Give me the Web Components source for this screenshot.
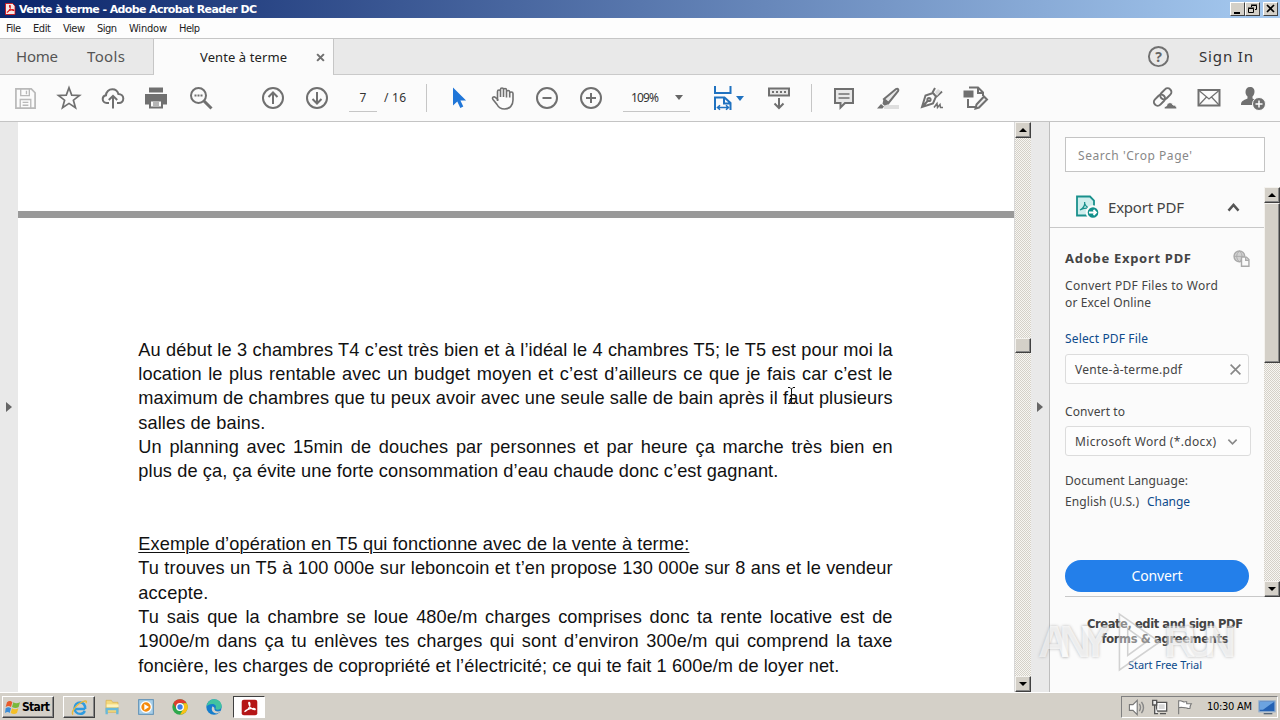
<!DOCTYPE html>
<html lang="en"><head><meta charset="utf-8"><title>Vente à terme - Adobe Acrobat Reader DC</title>
<style>html,body{margin:0;width:1280px;height:720px;overflow:hidden;background:#fff}</style></head><body>
<reader-app></reader-app>
<script>
const define=(name,html,setup)=>{
  customElements.define(name,class extends HTMLElement{
    constructor(){super();this.attachShadow({mode:'open'}).innerHTML=html;}
    connectedCallback(){setup&&setup.call(this,this.shadowRoot);}
  });
};

// One line of text, letter-spaced to the width given by the "w" attribute.
define('fit-text','<style>:host{display:block;white-space:nowrap}span{display:inline-block;white-space:pre}:host(.u) span{text-decoration:underline;text-decoration-thickness:1px;text-underline-offset:2px}</style><span></span>',function(r){
  const s=r.querySelector('span');s.textContent=this.getAttribute('t');
  const w=+this.getAttribute('w');
  if(w){const n=s.getBoundingClientRect().width;
    s.style.letterSpacing=((w-n)/(s.textContent.length-1))+'px';
    this.style.width=w+'px';}
});

const I={
save:'<g stroke="#b9b9b9" stroke-width="1.8"><path d="M2 2h16l4 4v16H2z"/><path d="M7 2v7h9V2M13 4v3.500M6.500 22v-9h11v9M9 16h6M9 19h6" stroke-width="1.4"/></g>',
star:'<path d="M12 1.800l2.700 7.300 7.800.3-6.100 4.800 2.100 7.500-6.500-4.300-6.500 4.300 2.100-7.500L1.500 9.400l7.800-.3z" stroke-width="1.700"/>',
cloud:'<path d="M8 17H5.800C3.400 17 1.700 15.300 1.700 13.100c0-2 1.400-3.500 3.300-3.800C5 5.900 7.900 3.200 11.300 3.200c3 0 5.400 1.900 6.100 4.800 2.700 0 4.900 1.900 4.900 4.600 0 2.400-1.800 4.400-4.300 4.400h-2M12 22.500V10.500M7.800 14L12 9.800l4.200 4.200"/>',
print:'<path d="M5 1.500h14v5H5z" fill="#707070" stroke="none"/><path d="M1 8h22v10.500h-4V14H5v4.500H1z" fill="#707070" stroke="none"/><path d="M6 14.500h12v7H6z"/><path d="M9 17h6M9 19h6" stroke-width="1"/>',
find:'<circle cx="9.500" cy="9.500" r="7.500"/><path d="M15 15l7.500 7.500" stroke-width="3"/><path d="M5.500 9.500h2M8.500 9.500h2M11.500 9.500h2"/>',
up:'<circle cx="12" cy="12" r="10"/><path d="M12 18V7M7.500 11L12 6.500l4.500 4.500"/>',
down:'<circle cx="12" cy="12" r="10"/><path d="M12 6v11M7.500 13l4.500 4.500 4.500-4.500"/>',
arrow:'<path d="M6 1.500v18l4.300-3.900 3 6.400 3-1.400-2.900-6.200h5.700z" fill="#2076d8" stroke="none"/>',
hand:'<path d="M6.500 15V5.500c0-2 3-2 3 0V11 3.500c0-2 3-2 3 0V11 4c0-2 3-2 3 0v7.500V6c0-2 3.200-2 3.200 0v5.500V7.500c0-2 3.300-2 3.300 0V14c0 5-3 9-8.500 9-3.500 0-6-1.500-7.500-4.500L2 13.500c-1.500-2 .8-3.500 2.500-2l3 3" stroke-width="1.600"/>',
minus:'<circle cx="12" cy="12" r="10"/><path d="M7.500 12h9"/>',
plus:'<circle cx="12" cy="12" r="10"/><path d="M7 12h10M12 7v10"/>',
fit:'<g stroke="#2072c0" stroke-width="2"><path d="M4 0v7h15.500V0M4 24V11.500h9.500l6 5.500v7M13 12v5.500h6"/><path d="M6.500 21.500h11M9 19.300l-2.500 2.200L9 23.700M15 19.300l2.500 2.200-2.500 2.200" stroke-width="1.500"/></g>',
key:'<path d="M2 2.500h20v7H2z" fill="#e8e8e8"/><path d="M5 6h2M9 6h2M13 6h2M17 6h2M12 12v10M7.500 17.500l4.500 4.500 4.500-4.500" /> ',
note:'<path d="M3 3h18v14h-8l-4.500 4.500V17H3z" fill="#e8e8e8"/><path d="M6.500 8h11M6.500 12h11" stroke-width="1.300"/>',
marker:'<path d="M8 19h15v4H8z" fill="#dedede" stroke="none"/><path d="M20 3c1.800-1 3 .5 2 2.200L12.500 17 8 13z" fill="#e8e8e8"/><path d="M7.500 13l6 5-5 1.500-2-1.500zM5 18l3 2.500-1.500 2H1z" fill="#707070" stroke="none"/>',
sign:'<path d="M13 7L5.500 9.500 2 21l11-3.500 3-7zM12.500 6.500L15 2M16 11l6-5.500M2.500 20.500L8.500 14" /><circle cx="9" cy="13.500" r="1.600"/><path d="M15 6l3-3 3 2-4 5z" fill="#ddd" stroke="none"/><path d="M14 21.500l3-4 .5 4 2.500-3 .5 3h2.500" stroke-width="1.500"/>',
more:'<path d="M5 1.500h9l5 5v3.500M14 2v5h5M4 13v8h8"/><path d="M.5 5.500h8v5h-8z" fill="#707070"/><path d="M12.500 18.500l7.500-8 3 3-8 8-3.500 1z" fill="#eee"/>',
link:'<g transform="rotate(-45 10 11)"><rect x="-1" y="7" width="12.500" height="7.500" rx="3.700"/><rect x="8" y="7" width="12.500" height="7.500" rx="3.700"/></g><path d="M11 23c0-2.500 2-3 2.500-3 .5-4 5.500-4.500 6.500-1 2-.2 4 1.500 4 4z" fill="#707070" stroke="#fbfbfb" stroke-width="1"/>',
mail:'<path d="M1.500 4h21v15.500h-21z"/><path d="M2 4.500l10 8.500L22 4.500M2 19l7.500-8M22 19l-7.500-8" stroke-width="1.200"/>',
user:'<path d="M9 1c3 0 4.800 2 4.500 5-.2 2-1 3.500-2 4.500v2L17 15v4H0c0-4 2-4.500 6.500-6.500v-2C5 9 4.500 7.500 4.500 6 4.500 3 6 1 9 1z" fill="#707070" stroke="none"/><circle cx="18" cy="18" r="6.500" fill="#707070" stroke="#fbfbfb" stroke-width="1"/><path d="M14.500 18h7M18 14.500v7" stroke="#fff" stroke-width="1.500"/>',
close:'<path d="M3 3l18 18M21 3L3 21" stroke-width="5.500"/>',
help:'<circle cx="12" cy="12" r="10"/>',
pdf:'<rect x="1" y="1" width="22" height="22" rx="3" fill="#b51616" stroke="none"/><path d="M5 18c6-3 8-8 7.500-12-.5-2.500-2-1-1.500.5.800 4.500 4.500 8.500 8 8.500 2.500-.3.500-2-2-1.700-5 .3-9.500 2-12 4.700z" stroke="#fff" stroke-width="1.700"/>',
pdf2:'<path d="M3 1h14l5 5v17H3z" fill="#f4e8e8" stroke="#d00" stroke-width="1.500"/><path d="M6 19c6-4 7-9 6.500-13-.5-2-2-1-1.500.5.800 4.500 4.500 8.500 7.500 8.500s0-2-2-1.700c-5 .3-8.500 3-10.500 5.700z" stroke="#d91111" stroke-width="2.200"/>',
export:'<path d="M2 1.500h13l4 4v15H2z" fill="#cfeeed" stroke="#19908c" stroke-width="1.800"/><path d="M5 15c4-2 5-5 4.700-8M9.500 7c0 3 2.500 6 6 6.500M5 15c3-2 6-2.500 10-1.500" stroke="#19908c" stroke-width="1.200"/><circle cx="18" cy="17.500" r="6.300" fill="#12908b" stroke="#fbfbfb"/><path d="M14 17.500h7M18.500 15l2.500 2.500-2.500 2.500" stroke="#fff" stroke-width="1.800"/>',
globe:'<g stroke="#aaa"><circle cx="9" cy="9" r="7.500" fill="#d2d2d2"/><path d="M1.500 9h15M9 1.500c-5 4-5 11 0 15M9 1.500c5 4 5 11 0 15" stroke-width="1.300"/><path d="M12 10h7l3.500 3.500V23H12z" fill="#fbfbfb"/><path d="M18 10v4.500h4.500"/></g>',
chevU:'<path d="M4 17l8-9 8 9" stroke="#555" stroke-width="4"/>',
chevD:'<path d="M3 8l9 9 9-9" stroke="#888" stroke-width="3.500"/>',
x:'<path d="M3 3l18 18M21 3L3 21" stroke="#888" stroke-width="3"/>',
ie:'<path d="M20 14H7M20 14c.5-6-3-9-7-9-4.500 0-8 3.500-8 8s3.500 8 8 8c3 0 5.500-1.500 6.500-4" stroke="#2e9be0" stroke-width="3.500"/><path d="M3 22c-3-2 1-10 8-15s13-6 10-1" stroke="#e9b93c" stroke-width="2"/>',
folder:'<path d="M3 2h8l2 3h8v15H3z" fill="#f3d97c" stroke="#d8ae4d" stroke-width="1"/><path d="M4 8h18v4H4z" fill="#fff2b8" stroke="none"/><path d="M4 23v-8h16v8" stroke="#68b9da" stroke-width="3.500"/>',
media:'<rect x="1" y="1" width="22" height="22" fill="#a9cfe9" stroke="#5b8fb5" stroke-width="1.500"/><circle cx="12" cy="12" r="8" fill="#f58a0c" stroke="#fff"/><path d="M9.500 7.500v9l7-4.500z" fill="#fff" stroke="none"/>',
chrome:'<circle cx="12" cy="12" r="11.500" fill="#2da84c" stroke="none"/><path d="M2 6.200A11.500 11.500 0 0 1 22 6.200H12z" fill="#e23b2e" stroke="none"/><path d="M22 6.200A11.500 11.500 0 0 1 12 23.500L17 15V6.200z" fill="#fbc116" stroke="none"/><path d="M2 6.200L7 15l5-9z" fill="#e23b2e" stroke="none"/><circle cx="12" cy="12" r="5" fill="#3b7de8" stroke="#fff"/>',
edge:'<circle cx="12" cy="12" r="11.500" fill="#157dcc" stroke="none"/><path d="M1 11C2 4 7 .5 12 .5c7 0 11.500 5 11.500 10 0 4-3 5.500-6 5.500-2.500 0-4-1-3-2.500C16 10 13 7.500 9.500 7.500 5.500 7.500 2.500 9 1 11z" fill="#41c3a0" stroke="none"/><path d="M10 11c-3 4-.5 9.500 4 10.500 3 .5 6-1 8-3.500-5 1.500-10 .5-9.500-5z" fill="#d4d0c8" stroke="none"/>',
win:'<path d="M3 5c3-3 6-2 8 0l-2 7c-3-2-5-2-8 0z" fill="#e85b2b" stroke="none"/><path d="M12.500 5c3 2 6 2 10 0l-2 7c-3 2-6 2-10 0z" fill="#79b93a" stroke="none"/><path d="M1 14c3-2 5-2 8 0l-2 7c-2-2-4-2-7 0z" fill="#3b8dd8" stroke="none"/><path d="M10.500 14c3 2 6 2 9.500 0l-2 7c-3 2-6 2-9.500 0z" fill="#f4bf27" stroke="none"/>',
sound:'<path d="M2 8h5l6-6v20l-6-6H2z" fill="#fff" stroke="#777" stroke-width="1.600"/><path d="M16 7c2 3 2 7 0 10M19 4c3.500 5 3.500 11 0 16" stroke="#888"/>',
net:'<path d="M7 5h15v13H7z" fill="#bbb" stroke="#555"/><path d="M9 7h11v9H9z" fill="#d8d8d8" stroke="#fff"/><path d="M1 2h6v7H1zM4 9v13h5M12 22h9" stroke="#555" fill="#eee"/>',
flag:'<path d="M4 23V2M4 3c5-2 7 3 10 1h2v3h7c-2 3-2 5-2 7-4 1-5-1-7-1-4 0-6-1-10 0z" fill="#fff" stroke="#777" stroke-width="1.600"/>',
desk:'<rect x="0" y="3" width="24" height="16" fill="#2462b4" stroke="#8aa9cc"/><path d="M1 4h22L6 16H1z" fill="#6ba3e0" stroke="none"/><path d="M7 22h13" stroke="#567"/>'
};
define('ui-icon','<style>:host{display:flex;align-items:center;justify-content:center;flex:none}svg{display:block;overflow:visible}</style><svg viewBox="0 0 24 24" fill="none" stroke="#707070" stroke-width="2"></svg>',function(r){
  const v=r.querySelector('svg'),s=this.getAttribute('s')||24;
  v.setAttribute('width',s);v.setAttribute('height',s);v.innerHTML=I[this.getAttribute('n')];
});

define('title-bar',`<style>:host{display:flex;align-items:center;height:18px;background:linear-gradient(90deg,#0a246a,#a6caf0);color:#fff;font:bold 11px "DejaVu Sans",sans-serif;padding:0 2px 0 4px;box-sizing:border-box}
fit-text{margin-left:3px;line-height:18px;padding-top:1px}
.b{display:flex;margin-left:auto}.b i{box-sizing:border-box;width:15px;height:14px;background:#d4d0c8;border:1px solid;border-color:#fff #404040 #404040 #fff}.b i:last-child{margin-left:3px}svg{display:block}</style>
<ui-icon n="pdf2" s="12"></ui-icon><fit-text t="Vente à terme - Adobe Acrobat Reader DC" w="238"></fit-text>
<div class="b"><i><svg width="13" height="12"><path d="M3 9h6v2H3z"/></svg></i><i><svg width="13" height="12" fill="none" stroke="#000"><path d="M5.500 4V2.500h5v4H9M5 2h6M2.500 5.500h5v4h-5zM2 5h6"/></svg></i><i><svg width="13" height="12" stroke="#000" stroke-width="1.700"><path d="M3 2l7 7M10 2L3 9"/></svg></i></div>`);

define('menu-bar',`<style>:host{display:flex;height:20px;box-sizing:border-box;background:#fdfdfd;font:11px/20px "DejaVu Sans Condensed","DejaVu Sans",sans-serif;color:#222;padding:1px 0 0 6px}</style>
<fit-text t="File" w="15"></fit-text><fit-text style="margin-left:12px" t="Edit" w="18"></fit-text><fit-text style="margin-left:12px" t="View" w="22"></fit-text><fit-text style="margin-left:12px" t="Sign" w="20"></fit-text><fit-text style="margin-left:12px" t="Window" w="38"></fit-text><fit-text style="margin-left:12px" t="Help" w="21"></fit-text>`);

define('tab-bar',`<style>:host{display:flex;height:37px;background:#e9e9e9;box-sizing:border-box;color:#555;font:15px/34px "Noto Sans",sans-serif}
.l,.r{display:flex;box-sizing:border-box;border-top:1px solid #c6c6c6;border-bottom:1px solid #cacaca}
.l{width:154px;border-right:1px solid #c6c6c6;padding-left:16px}
.a{display:flex;width:179px;background:#fbfbfb;font-size:13px;color:#222;line-height:37px;border-top:1px solid #c6c6c6;box-sizing:border-box;padding-left:46px}
.a ui-icon{margin-left:29px}.r{flex:1;border-left:1px solid #c6c6c6;justify-content:flex-end;padding-right:27px}
.h{display:grid;margin-right:29px;color:#666}.h>*{grid-area:1/1}.h span{font:bold 14px/35px "Noto Sans",sans-serif;text-align:center}</style>
<div class="l"><fit-text t="Home" w="42"></fit-text><fit-text t="Tools" w="38" style="margin-left:29px"></fit-text></div>
<div class="a"><fit-text t="Vente à terme" w="87"></fit-text><ui-icon n="close" s="9"></ui-icon></div>
<div class="r"><div class="h"><ui-icon n="help" s="23"></ui-icon><span>?</span></div><fit-text t="Sign In" w="54" style="color:#333"></fit-text></div>`);

const ic=(n,s=24,w=44)=>`<ui-icon n="${n}" s="${s}" style="width:${w}px"></ui-icon>`;
define('tool-bar',`<style>:host{display:flex;align-items:center;height:47px;box-sizing:border-box;background:#fbfbfb;border-bottom:1px solid #c4c4c4;padding-left:3px;padding-right:5px;font:12px/26px "Noto Sans",sans-serif;color:#333}
.f{display:flex;box-sizing:border-box;height:28px;border-bottom:1px solid #c6c6c6;align-items:center}
.s{width:1px;height:28px;background:#c6c6c6}.c{border:4px solid transparent;border-top:5px solid #666;border-bottom:0}</style>
${ic('save',23)+ic('star')+ic('cloud')+ic('print',24,42)+ic('find',24,47)}<div style="width:27px"></div>${ic('up',24)+ic('down',24)}
<div class="f" style="width:28px;margin-left:10px;justify-content:center">7</div><fit-text t="/ 16" w="22" style="margin-left:7px"></fit-text>
<div class="s" style="margin:0 10px 0 20px"></div>${ic('arrow')+ic('hand')+ic('minus',24)+ic('plus',24)}
<div class="f" style="width:67px;margin-left:10px;padding-left:8px"><fit-text t="109%" w="28"></fit-text><div class="c" style="margin-left:16px"></div></div>
<div style="display:flex;align-items:center;width:56px;margin-left:11px">${ic('fit',24,44)}<div class="c" style="border-top-color:#2072c0;margin-left:-9px"></div></div>${ic('key',24,44)}
<div class="s" style="margin:0 10px"></div>${ic('note')+ic('marker')+ic('sign')+ic('more')}<div style="flex:1"></div>${ic('link',24,45)+ic('mail')+ic('user')}`);

define('scroll-bar',`<style>:host{display:flex;flex-direction:column;flex:none;box-sizing:border-box;background:repeating-conic-gradient(#d4d0c8 0 25%,#f7f6f2 0 50%) 0 0/2px 2px}
i{box-sizing:border-box;height:16px;background:#d4d0c8;border:1px solid;border-color:#f4f2ee #404040 #404040 #f4f2ee;box-shadow:inset -1px -1px #888;display:flex;align-items:center;justify-content:center;flex:none}
i:first-of-type::before,i:last-of-type::before{content:"";border:4px solid transparent;border-bottom:4px solid #000;border-top:0}i:last-of-type::before{transform:scaleY(-1)}b{flex:1}</style><i></i><i class="t"></i><b></b><i></i>`,function(r){
  const t=r.querySelector('.t');t.style.height=this.getAttribute('size')+'px';t.style.marginTop=this.getAttribute('pos')+'px';
});

const L=[['Au début le 3 chambres T4 c’est très bien et à l’idéal le 4 chambres T5; le T5 est pour moi la'],['location le plus rentable avec un budget moyen et c’est d’ailleurs ce que je fais car c’est le'],['maximum de chambres que tu peux avoir avec une seule salle de bain après il faut plusieurs'],['salles de bains.',127],['Un planning avec 15min de douches par personnes et par heure ça marche très bien en'],['plus de ça, ça évite une forte consommation d’eau chaude donc c’est gagnant.',640],[''],[''],['Exemple d’opération en T5 qui fonctionne avec de la vente à terme:',551,1],['Tu trouves un T5 à 100 000e sur leboncoin et t’en propose 130 000e sur 8 ans et le vendeur'],['accepte.',70],['Tu sais que la chambre se loue 480e/m charges comprises donc ta rente locative est de'],['1900e/m dans ça tu enlèves tes charges qui sont d’environ 300e/m qui comprend la taxe'],['foncière, les charges de copropriété et l’électricité; ce qui te fait 1 600e/m de loyer net.',701]];
define('pdf-view',`<style>:host{display:block;position:relative;width:996px;height:570px;background:#fff;font:18.200px/24.300px "Liberation Sans",Arial,sans-serif;color:#111;overflow:hidden}
.g{margin-top:89px;height:6.500px;background:#999}.p{margin:120.300px 0 0 120.300px;width:754.300px}.p>div{height:24.300px;white-space:nowrap}.j{text-align-last:justify;white-space:normal!important;letter-spacing:.1px;word-spacing:-1px}
.cur{position:absolute;left:769px;top:265px}</style>
<div class="g"></div><div class="p">${L.map(([t,w,u])=>w?`<div><fit-text class="${u?'u':''}" t="${t}" w="${w}"></fit-text></div>`:`<div class="j">${t}</div>`).join('')}</div>
<svg class="cur" width="9" height="17" fill="none" stroke="#111"><path d="M1 .5h2l1.500 1.500L6 .5h2M4.500 2v13M1 16.500h2L4.500 15 6 16.500h2M3 11.500h3"/></svg>`);

define('side-panel',`<style>:host{display:flex;flex-direction:column;width:230px;height:570px;background:#fbfbfb;font:12px/17px "Noto Sans",sans-serif;color:#444;position:relative;box-sizing:border-box}
.q{box-sizing:border-box;margin:15px 0 0 15px;width:200px;height:35px;border:1px solid #c4c4c4;background:#fff;padding:9px 12px 7px;color:#888}
.m{display:flex;height:410px;margin-top:15px}.c{width:214px;position:relative}.h{display:flex;height:40px;border-bottom:1px solid #c8c8c8;align-items:center;padding-left:25px;font-size:15px}
.h fit-text{margin-left:9px}.b{padding-left:15px}.r{display:flex;align-items:center}.k{color:#0d4b8c}
.x{box-sizing:border-box;border:1px solid #dcdcdc;border-radius:3px;display:flex;align-items:center;padding-left:9px;width:184px;height:30px;background:#fdfdfd}
.v{margin-top:50px;width:184px;height:32px;border-radius:16px;background:#237fea;color:#fff;font-size:14px;line-height:31px;display:flex;justify-content:center}
.e{height:4px;border-bottom:1px solid #c8c8c8}
.o{display:flex;flex-direction:column;align-items:center;margin-top:20px;line-height:15px}.o .z{font:bold 11.500px/15px "DejaVu Sans","Noto Sans",sans-serif}
.w{position:absolute;left:-12px;top:487px;width:200px;height:66px;display:flex;align-items:center;color:rgba(255,255,255,.75);font:bold 44px/66px "Liberation Sans Narrow","Liberation Sans",sans-serif;text-shadow:0 0 3px #999;opacity:.65}</style>
<div class="q"><fit-text t="Search 'Crop Page'" w="114"></fit-text></div>
<div class="m"><div class="c"><div class="h"><ui-icon n="export" s="24"></ui-icon><fit-text t="Export PDF" w="76"></fit-text><ui-icon n="chevU" s="15" style="margin-left:42px"></ui-icon></div>
<div class="b"><div class="r" style="height:20px;margin-top:20px;font:bold 13px/20px 'Noto Sans',sans-serif"><fit-text t="Adobe Export PDF" w="126"></fit-text><ui-icon n="globe" s="17" style="margin-left:42px"></ui-icon></div>
<fit-text t="Convert PDF Files to Word" w="153" style="margin-top:9px"></fit-text><fit-text t="or Excel Online" w="86"></fit-text>
<fit-text class="k" t="Select PDF File" w="83" style="margin-top:19px"></fit-text>
<div class="x" style="margin-top:7px"><fit-text t="Vente-à-terme.pdf" w="107"></fit-text><ui-icon n="x" s="13" style="margin-left:47px"></ui-icon></div>
<fit-text t="Convert to" w="60" style="margin-top:19px"></fit-text>
<div class="x" style="margin-top:6px;width:186px"><fit-text t="Microsoft Word (*.docx)" w="141"></fit-text><ui-icon n="chevD" s="11" style="margin-left:11px"></ui-icon></div>
<fit-text t="Document Language:" w="123" style="margin-top:16px"></fit-text>
<div class="r" style="margin-top:4px"><fit-text t="English (U.S.)" w="74"></fit-text><fit-text class="k" t="Change" w="43" style="margin-left:8px"></fit-text></div>
<div class="v"><fit-text t="Convert" w="51"></fit-text></div><div class="e"></div></div></div>
<scroll-bar pos="0" size="160" style="width:16px"></scroll-bar></div>
<div class="o"><fit-text class="z" t="Create, edit and sign PDF" w="156"></fit-text><fit-text class="z" t="forms &amp; agreements" w="127"></fit-text><fit-text class="k" t="Start Free Trial" w="74" style="margin-top:10px;font-size:11px"></fit-text></div>
<div class="w"><fit-text t="ANY" w="72"></fit-text><svg width="54" height="62" viewBox="0 0 52 60" fill="none" stroke="#bdbdbd" stroke-width="1.500"><path d="M9 3L48 30 9 57z" fill="rgba(255,255,255,.6)"/><path d="M17 17l18 13-18 13z"/></svg><fit-text t="RUN" w="72"></fit-text></div>`);

define('task-bar',`<style>:host{display:flex;align-items:center;box-sizing:border-box;height:28px;background:#d4d0c8;border-top:1px solid #fff;box-shadow:0 -1px #d4d0c8;padding:1px 2px 0;font:11px/20px "DejaVu Sans Condensed","DejaVu Sans",sans-serif;color:#000}
.s,.a,.z{box-sizing:border-box;display:flex;align-items:center;height:22px;border:1px solid;border-color:#fff #404040 #404040 #fff;box-shadow:inset -1px -1px #888}
.s{width:52px;font:bold 12px/20px "DejaVu Sans Condensed","DejaVu Sans",sans-serif;padding-left:2px}.a{width:32px;margin-left:9px;justify-content:center}.z{width:32px;background:#fff;border-color:#404040 #fff #fff #404040;box-shadow:none;justify-content:center;margin-left:1px}
.t{margin-left:auto;box-sizing:border-box;width:157px;height:22px;display:flex;align-items:center;border:1px solid;border-color:#808080 #fff #fff #808080;padding-left:6px}</style>
<div class="s"><ui-icon n="win" s="16"></ui-icon><fit-text t="Start" w="28" style="margin-left:1px"></fit-text></div><div class="a"><ui-icon n="ie" s="17"></ui-icon></div>
${ic('folder',16,34)+ic('media',16,34)+ic('chrome',16,34)+ic('edge',16,34)}<div class="z" style="margin-left:2px"><ui-icon n="pdf" s="17"></ui-icon></div>
<div class="t"><ui-icon n="sound" s="17"></ui-icon><ui-icon n="net" s="16" style="margin-left:7px"></ui-icon><ui-icon n="flag" s="16" style="margin-left:8px"></ui-icon><fit-text t="10:30 AM" w="45" style="margin-left:15px"></fit-text><ui-icon n="desk" s="16" style="margin-left:7px"></ui-icon></div>`);

define('reader-app',`<style>:host{display:block;width:1280px;height:720px;overflow:hidden}.m{display:flex;height:570px}.g{box-sizing:border-box;width:18px;background:#e9e9e9;display:flex;align-items:center;justify-content:center;flex:none}
.g::before{content:"";border:5px solid transparent;border-left:6px solid #666;border-right:0}.g.r{width:19px;border-right:1px solid #bebebe}</style>
<title-bar></title-bar><menu-bar></menu-bar><tab-bar></tab-bar><tool-bar></tool-bar>
<div class="m"><div class="g"></div><pdf-view></pdf-view><scroll-bar pos="200" size="15" style="width:17px;border-left:1px solid #d8d8d8"></scroll-bar><div class="g r"></div><side-panel></side-panel></div>
<task-bar></task-bar>`);
</script></body></html>
